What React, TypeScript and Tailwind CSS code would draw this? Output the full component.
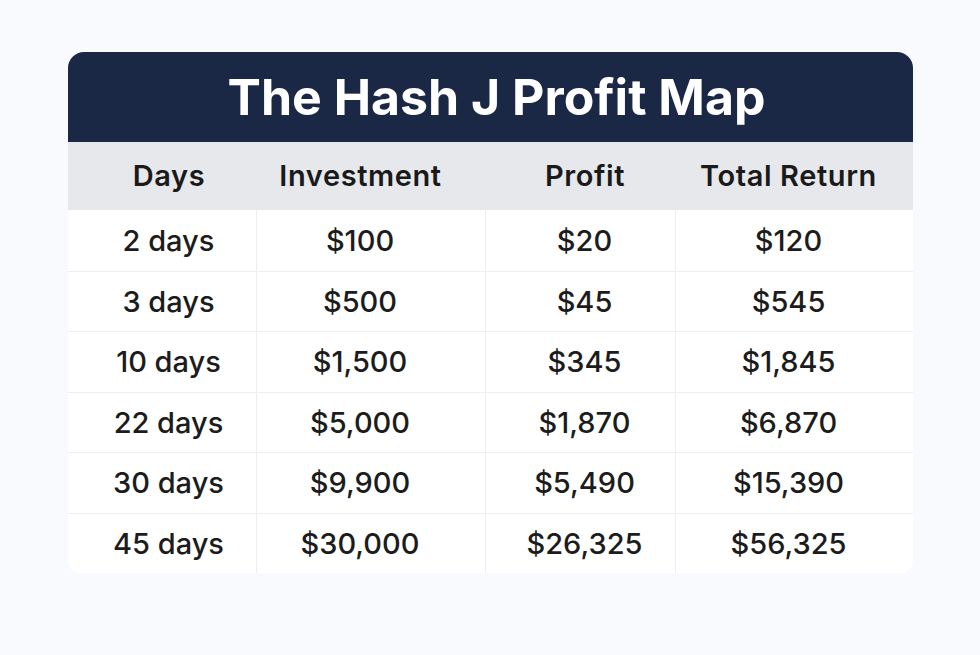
import React from "react";

const rows = [
  ["2 days", "$100", "$20", "$120"],
  ["3 days", "$500", "$45", "$545"],
  ["10 days", "$1,500", "$345", "$1,845"],
  ["22 days", "$5,000", "$1,870", "$6,870"],
  ["30 days", "$9,900", "$5,490", "$15,390"],
  ["45 days", "$30,000", "$26,325", "$56,325"],
];

const colCls = [
  "w-[189px] pl-[13px]",
  "w-[229px] pr-[22px]",
  "w-[190px] pl-[8px]",
  "w-[237px] pr-[12px]",
];

export default function App() {
  return (
    <div
      className="w-[980px] h-[655px] bg-[#f8fafd] pt-[52px] pl-[68px]"
      style={{ fontFamily: "Inter, 'Noto Sans', sans-serif" }}
    >
      <div className="w-[845px] rounded-t-[16px] rounded-b-[12px] bg-white overflow-hidden">
        <div className="h-[90px] bg-[#1a2845] flex items-center justify-center pl-[12px]">
          <span className="text-white text-[50px] font-bold tracking-[0px] leading-none">
            The Hash J Profit Map
          </span>
        </div>
        <div className="h-[68px] bg-[#e7e8ec] flex">
          {["Days", "Investment", "Profit", "Total Return"].map((h, i) => (
            <div
              key={h}
              className={`${colCls[i]} flex items-center justify-center text-[29px] tracking-[0.6px] font-semibold text-[#1a1a1a]`}
            >
              {h}
            </div>
          ))}
        </div>
        {rows.map((r, ri) => (
          <div
            key={ri}
            className={`h-[60.5px] flex ${ri > 0 ? "border-t border-[#eceef1]" : ""}`}
          >
            {r.map((c, i) => (
              <div
                key={i}
                className={`${colCls[i]} flex items-center justify-center text-[29px] font-medium text-[#1c1c1c] ${
                  i < 3 ? "border-r border-[#eceef1]" : ""
                }`}
              >
                {c}
              </div>
            ))}
          </div>
        ))}
      </div>
    </div>
  );
}
